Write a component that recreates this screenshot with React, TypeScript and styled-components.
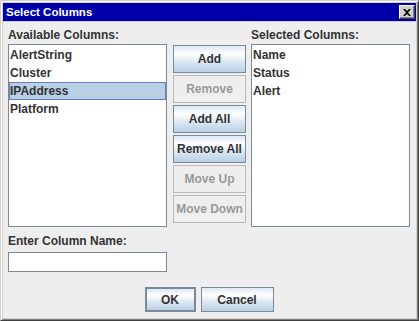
import React from "react"
import styled, { createGlobalStyle, css } from "styled-components"

const GlobalStyle = createGlobalStyle`
  body {
    margin: 0;
    background: #d4d0c8;
    font-family: "Liberation Sans", Arial, sans-serif;
  }
`

const Window = styled.div`
  width: 419px;
  height: 321px;
  box-sizing: border-box;
  display: flex;
  flex-direction: column;
  padding: 2px;
  background: #d4d0c8;
  border: 1px solid;
  border-color: #d4d0c8 #404040 #404040 #d4d0c8;
  box-shadow: inset 1px 1px #ffffff, inset -1px -1px #808080;
`
const TitleBar = styled.div`
  height: 18px;
  flex: none;
  display: flex;
  align-items: center;
  justify-content: space-between;
  padding: 0 1px 0 3px;
  background: #0000a8;
`
const Title = styled.span`
  color: #ffffff;
  font-weight: bold;
  font-size: 11.5px;
  line-height: 18px;
`
const CloseButton = styled.div`
  width: 16px;
  height: 14px;
  box-sizing: border-box;
  display: flex;
  align-items: center;
  justify-content: center;
  background: #d4d0c8;
  border: 1px solid;
  border-color: #ffffff #404040 #404040 #ffffff;
  box-shadow: inset -1px -1px #808080;
`
const Content = styled.div`
  flex: 1;
  margin-top: 1px;
  padding: 6px 6px 0 5px;
  background: #eeeeee;
  display: flex;
  flex-direction: column;
`
const Columns = styled.div`
  display: grid;
  grid-template-columns: 159px 84px 159px;
  grid-template-rows: 14px 183px;
  row-gap: 2px;
`
const Label = styled.div<{ $col?: number }>`
  grid-column: ${p => p.$col ?? 1};
  font-size: 12px;
  font-weight: bold;
  line-height: 14px;
  color: #333333;
  white-space: nowrap;
`
const List = styled.div`
  box-sizing: border-box;
  background: #ffffff;
  border: 1px solid #7a8a99;
  padding-top: 1px;
`
const Item = styled.div<{ $selected?: boolean }>`
  height: 18px;
  box-sizing: border-box;
  line-height: 17px;
  overflow: hidden;
  border: 1px solid transparent;
  font-size: 12px;
  font-weight: bold;
  color: #333333;
  ${p => p.$selected && css`
    background: #b8cfe5;
    border-color: #6382bf;
  `}
`
const ButtonColumn = styled.div`
  display: flex;
  flex-direction: column;
  gap: 2px;
  padding: 1px 5px 0 6px;
`
const Button = styled.div<{ $disabled?: boolean; $default?: boolean; $w?: number; $h?: number }>`
  width: ${p => p.$w ?? 73}px;
  height: ${p => p.$h ?? 28}px;
  box-sizing: border-box;
  display: flex;
  align-items: center;
  justify-content: center;
  font-size: 12px;
  font-weight: bold;
  color: #333333;
  white-space: nowrap;
  border: ${p => (p.$default ? 2 : 1)}px solid #7a8a99;
  background: linear-gradient(to bottom, #dde8f3 0%, #ffffff 30%, #dde8f3 60%, #b8cfe5 100%);
  ${p => p.$disabled && css`
    color: #999999;
    border-color: #b8b8b8;
    background: #eeeeee;
  `}
`
const FieldLabel = styled(Label)`
  margin-top: 7px;
`
const TextField = styled.div`
  width: 159px;
  height: 20px;
  box-sizing: border-box;
  margin-top: 4px;
  background: #ffffff;
  border: 1px solid #7a8a99;
`
const ButtonRow = styled.div`
  display: flex;
  justify-content: center;
  gap: 5px;
  margin-top: 15px;
`

const available = ["AlertString", "Cluster", "IPAddress", "Platform"]
const selected = ["Name", "Status", "Alert"]
const actions = [
  { text: "Add", disabled: false },
  { text: "Remove", disabled: true },
  { text: "Add All", disabled: false },
  { text: "Remove All", disabled: false },
  { text: "Move Up", disabled: true },
  { text: "Move Down", disabled: true },
]

const App = () => {
  return (
    <>
      <GlobalStyle />
      <Window>
        <TitleBar>
          <Title>Select Columns</Title>
          <CloseButton>
            <svg width="8" height="7" viewBox="0 0 8 7">
              <path d="M0 0h2l2 2 2-2h2L5 3.5 8 7H6L4 5 2 7H0l3-3.5z" fill="#000" />
            </svg>
          </CloseButton>
        </TitleBar>
        <Content>
          <Columns>
            <Label $col={1}>Available Columns:</Label>
            <Label $col={3}>Selected Columns:</Label>
            <List>
              {available.map(name => (
                <Item key={name} $selected={name === "IPAddress"}>{name}</Item>
              ))}
            </List>
            <ButtonColumn>
              {actions.map(a => (
                <Button key={a.text} $disabled={a.disabled}>{a.text}</Button>
              ))}
            </ButtonColumn>
            <List>
              {selected.map(name => (
                <Item key={name}>{name}</Item>
              ))}
            </List>
          </Columns>
          <FieldLabel>Enter Column Name:</FieldLabel>
          <TextField />
          <ButtonRow>
            <Button $default $w={51} $h={25}>OK</Button>
            <Button $w={73} $h={25}>Cancel</Button>
          </ButtonRow>
        </Content>
      </Window>
    </>
  )
}

export default App
